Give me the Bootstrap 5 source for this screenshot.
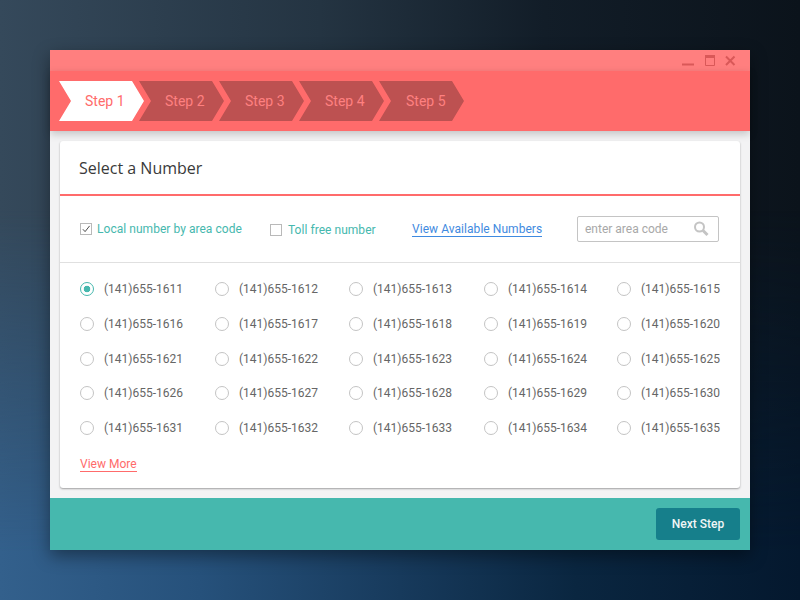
<!DOCTYPE html>
<html lang="en">
<head>
<meta charset="utf-8">
<title>Select a Number</title>
<link href="https://cdn.jsdelivr.net/npm/bootstrap@5.3.0/dist/css/bootstrap.min.css" rel="stylesheet">
<style>
html,body{height:100%}
body{margin:0;width:800px;height:600px;overflow:hidden;padding:50px;position:relative;font-family:Roboto,"Liberation Sans",sans-serif;
 background:linear-gradient(to right,#35495b 0,#243442 40%,#121d28 68%,#0b131b 100%);}
body::before{content:"";position:absolute;inset:0;z-index:-1;
 background:linear-gradient(to right,#33608c 0,#26517b 25%,#173a5c 50%,#0a2640 72%,#04182e 100%);
 -webkit-mask-image:linear-gradient(to bottom,transparent 35%,#000 92%);mask-image:linear-gradient(to bottom,transparent 35%,#000 92%)}
.app-window{width:700px;height:500px;background:#f3f3f4;box-shadow:0 6px 16px rgba(0,0,0,.4)}
.title-strip{height:21px;background:#ff7f7f;padding-right:12px}
.step-strip{height:60px;background:#ff6b6b;padding:10px 0 10px 9px;box-shadow:0 3px 8px rgba(0,0,0,.2);position:relative}
.step-item{width:85px;height:40px;margin-right:-5px;background:#bd5151;color:#ff8080;font-size:14px;line-height:40px;padding-left:26px;
 clip-path:polygon(0 0,73px 0,85px 50%,73px 100%,0 100%,12px 50%)}
.step-item.is-current{background:#fff;color:#ff6b6b}
.step-item.is-last{padding-left:27px}
.sheet{margin:10px;height:347px;background:#fff;border-radius:3px;box-shadow:0 1px 2px rgba(0,0,0,.35)}
.sheet-head{height:55px;border-bottom:2px solid #ff6b6b;padding:1px 0 0 19px;font:16px/53px "Open Sans",sans-serif;color:#3a3a3a}
.filter-row{height:67px;border-bottom:1px solid #e0e0e0;padding:0 21px 0 20px;font-size:12px}
.opt-label{color:#46b8ae;white-space:nowrap;letter-spacing:.04px}
.opt-local{gap:5px;width:190px}
.opt-toll{gap:6px;width:142px;padding-top:1px}
.form-check-input.box-check{width:12px;height:12px;border:1px solid #b9b9b9;border-radius:0;margin:0;background-color:#fff}
.form-check-input.box-check:checked{background-color:#fff;border-color:#b9b9b9;background-size:11px;
 background-image:url("data:image/svg+xml,%3csvg xmlns='http://www.w3.org/2000/svg' viewBox='0 0 12 12'%3e%3cpath fill='none' stroke='%23444' stroke-width='1' d='M2.5 6l2.3 2.5 4.7-6'/%3e%3c/svg%3e")}
.view-link{color:#3f8ae0;text-decoration:none;border-bottom:1px solid #3f8ae0;line-height:14px;letter-spacing:.05px}
.area-box{width:142px;height:26px;border:1px solid #c4c4c4;border-radius:2px;padding:0 9px 0 7px}
.area-input{border:0;outline:0;padding:0;width:100px;font-size:12px;color:#666;background:transparent}
.area-input::placeholder{color:#a8a8a8;opacity:1}
.num-grid{display:grid;grid-template-columns:135px 134px 135px 133px auto;grid-auto-rows:34.75px;padding:8.8px 20px 0;font-size:12px;color:#666}
.num-cell{gap:10px;white-space:nowrap}
.form-check-input.dot-radio{width:14px;height:14px;margin:0;border:1px solid #c4c4c4;background-color:#fff}
.form-check-input.dot-radio:checked{border-color:#46b8ae;background-color:#fff;background-image:radial-gradient(circle,#46b8ae 0,#46b8ae 3px,transparent 3.6px);background-size:auto}
.more-link{color:#ff6b6b;text-decoration:none;border-bottom:1px solid #ff6b6b;font-size:12px;line-height:13px;margin:12px 0 0 20px}
.foot-strip{height:52px;background:#46b8ae;padding:0 10px}
.next-btn{width:84px;height:32px;padding:0;background:#167f8b;border:0;border-radius:3px;font-size:12px;font-weight:500;color:#f0f6f6}
.next-btn:hover{background:#167f8b;color:#f0f6f6}
</style>
</head>
<body>
<div class="app-window d-flex flex-column">
  <div class="title-strip d-flex justify-content-end align-items-center">
    <svg width="64" height="21" viewBox="0 0 64 21" fill="none" stroke="#d95858" aria-hidden="true">
      <path d="M8 14.5h12" stroke-width="2"/>
      <path d="M31.5 6.5h9v9h-9z" stroke-width="1"/><path d="M31 6.5h10" stroke-width="3"/>
      <path d="M52 6.5l8.500 8.500M60.500 6.500l-8.500 8.500" stroke-width="2"/>
    </svg>
  </div>
  <div class="step-strip d-flex">
    <div class="step-item is-current">Step 1</div>
    <div class="step-item">Step 2</div>
    <div class="step-item">Step 3</div>
    <div class="step-item">Step 4</div>
    <div class="step-item is-last">Step 5</div>
  </div>
  <div class="sheet">
    <div class="sheet-head">Select a Number</div>
    <div class="filter-row d-flex align-items-center">
      <label class="d-flex align-items-center opt-label opt-local"><input class="form-check-input box-check" type="checkbox" checked>Local number by area code</label>
      <label class="d-flex align-items-center opt-label opt-toll"><input class="form-check-input box-check" type="checkbox">Toll free number</label>
      <a href="#" class="view-link">View Available Numbers</a>
      <div class="area-box d-flex align-items-center ms-auto">
        <input class="area-input" type="text" placeholder="enter area code">
        <svg class="ms-auto" width="16" height="16" viewBox="0 0 16 16" fill="none" stroke="#c4c4c4" aria-hidden="true"><circle cx="6.500" cy="6" r="4.500" stroke-width="2"/><path d="M10 9.500l4.500 4.500" stroke-width="3"/></svg>
      </div>
    </div>
    <div class="num-grid">
      <label class="num-cell d-flex align-items-center"><input class="form-check-input dot-radio" type="radio" name="n" checked>(141)655-1611</label>
      <label class="num-cell d-flex align-items-center"><input class="form-check-input dot-radio" type="radio" name="n">(141)655-1612</label>
      <label class="num-cell d-flex align-items-center"><input class="form-check-input dot-radio" type="radio" name="n">(141)655-1613</label>
      <label class="num-cell d-flex align-items-center"><input class="form-check-input dot-radio" type="radio" name="n">(141)655-1614</label>
      <label class="num-cell d-flex align-items-center"><input class="form-check-input dot-radio" type="radio" name="n">(141)655-1615</label>
      <label class="num-cell d-flex align-items-center"><input class="form-check-input dot-radio" type="radio" name="n">(141)655-1616</label>
      <label class="num-cell d-flex align-items-center"><input class="form-check-input dot-radio" type="radio" name="n">(141)655-1617</label>
      <label class="num-cell d-flex align-items-center"><input class="form-check-input dot-radio" type="radio" name="n">(141)655-1618</label>
      <label class="num-cell d-flex align-items-center"><input class="form-check-input dot-radio" type="radio" name="n">(141)655-1619</label>
      <label class="num-cell d-flex align-items-center"><input class="form-check-input dot-radio" type="radio" name="n">(141)655-1620</label>
      <label class="num-cell d-flex align-items-center"><input class="form-check-input dot-radio" type="radio" name="n">(141)655-1621</label>
      <label class="num-cell d-flex align-items-center"><input class="form-check-input dot-radio" type="radio" name="n">(141)655-1622</label>
      <label class="num-cell d-flex align-items-center"><input class="form-check-input dot-radio" type="radio" name="n">(141)655-1623</label>
      <label class="num-cell d-flex align-items-center"><input class="form-check-input dot-radio" type="radio" name="n">(141)655-1624</label>
      <label class="num-cell d-flex align-items-center"><input class="form-check-input dot-radio" type="radio" name="n">(141)655-1625</label>
      <label class="num-cell d-flex align-items-center"><input class="form-check-input dot-radio" type="radio" name="n">(141)655-1626</label>
      <label class="num-cell d-flex align-items-center"><input class="form-check-input dot-radio" type="radio" name="n">(141)655-1627</label>
      <label class="num-cell d-flex align-items-center"><input class="form-check-input dot-radio" type="radio" name="n">(141)655-1628</label>
      <label class="num-cell d-flex align-items-center"><input class="form-check-input dot-radio" type="radio" name="n">(141)655-1629</label>
      <label class="num-cell d-flex align-items-center"><input class="form-check-input dot-radio" type="radio" name="n">(141)655-1630</label>
      <label class="num-cell d-flex align-items-center"><input class="form-check-input dot-radio" type="radio" name="n">(141)655-1631</label>
      <label class="num-cell d-flex align-items-center"><input class="form-check-input dot-radio" type="radio" name="n">(141)655-1632</label>
      <label class="num-cell d-flex align-items-center"><input class="form-check-input dot-radio" type="radio" name="n">(141)655-1633</label>
      <label class="num-cell d-flex align-items-center"><input class="form-check-input dot-radio" type="radio" name="n">(141)655-1634</label>
      <label class="num-cell d-flex align-items-center"><input class="form-check-input dot-radio" type="radio" name="n">(141)655-1635</label>
    </div>
    <a href="#" class="more-link d-inline-block">View More</a>
  </div>
  <div class="foot-strip d-flex justify-content-end align-items-center">
    <button type="button" class="btn next-btn">Next Step</button>
  </div>
</div>
<script src="https://cdn.jsdelivr.net/npm/bootstrap@5.3.0/dist/js/bootstrap.bundle.min.js"></script>
</body>
</html>
